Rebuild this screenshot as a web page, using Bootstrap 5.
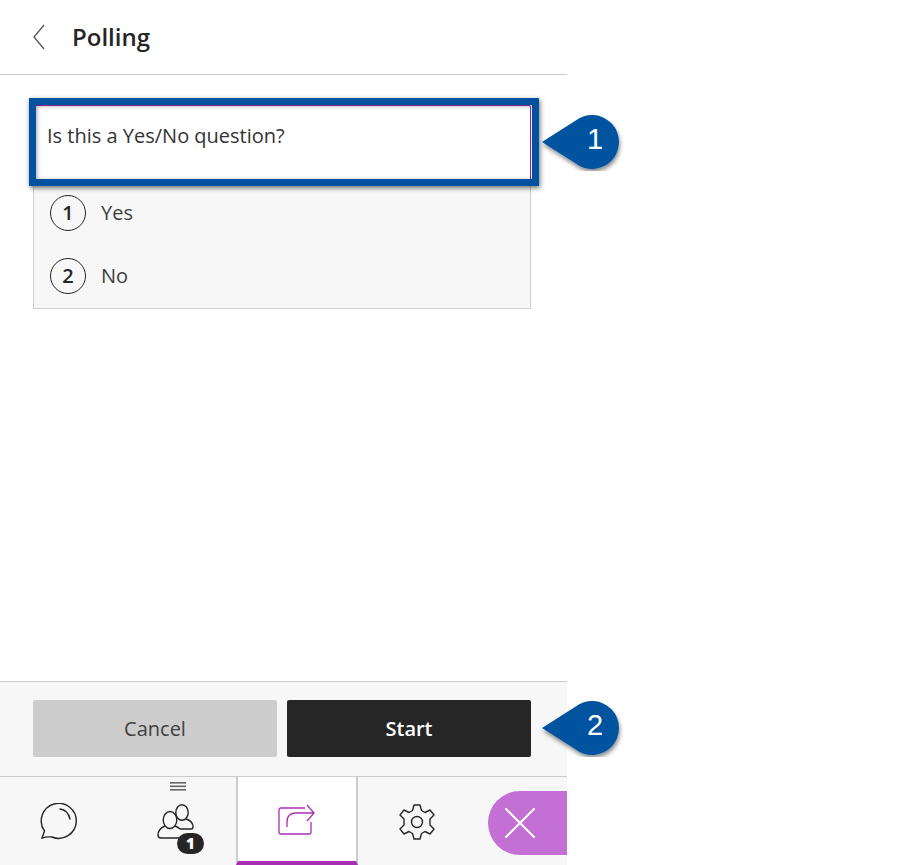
<!DOCTYPE html>
<html lang="en">
<head>
<meta charset="utf-8">
<title>Polling</title>
<link href="https://cdn.jsdelivr.net/npm/bootstrap@5.3.0/dist/css/bootstrap.min.css" rel="stylesheet">
<style>
html,body{height:865px;overflow:hidden;background:#fff}
body{font-family:"Open Sans",sans-serif;color:#262626;position:relative}
.panel-shell{width:567px;height:865px}
.panel-head{height:75px;border-bottom:1px solid #cdcdcd;padding-left:29px;gap:23px}
.panel-title{font-size:24px;font-weight:600;line-height:1;margin:0;color:#262626}
.panel-body-area{padding:30px 36px 0 33px}
.q-field{height:76px;margin-top:0;border:1px solid #9c27b0;border-radius:2px;background:#fff;padding:17px 13px;font-size:20px;line-height:26px;color:#333}
.q-options{background:#f7f7f7;border:1px solid #cdcdcd;border-top:0;height:128px;padding:0 16px}
.q-opt{height:63px;gap:15px;font-size:20px;color:#404040}
.q-num{width:36px;height:36px;border:1px solid #262626;border-radius:50%;font-size:20px;font-weight:600;background:#f7f7f7;color:#262626}
.q-options .q-opt:first-child{margin-top:0}
.act-bar{height:95px;background:#f7f7f7;border-top:1px solid #cdcdcd;padding:18px 36px 0 33px;gap:10px}
.act-btn{flex:1 1 0;height:57px;border:0;border-radius:2px;font-size:20px;padding:0;font-family:inherit}
.act-cancel{background:#cdcdcd;color:#404040}
.act-start{background:#262626;color:#fff;font-weight:600}
.tab-bar{height:89px;background:#f7f7f7;border-top:1px solid #cdcdcd;position:relative}
.tab-cell{height:88px;padding-top:26px}
.tab-a{width:116px}
.tab-b{width:120px;position:relative}
.tab-c{width:122px;background:#fff;border-left:2px solid #cdcdcd;border-right:2px solid #cdcdcd;border-bottom:4px solid #a82fb4}
.tab-d{width:118px}
.grip{position:absolute;left:54px;top:5px;width:16px;height:9px}
.count-pill{position:absolute;left:61px;top:56px;width:27px;height:21px;border-radius:11px;background:#262626;color:#fff;font-size:15px;font-weight:800;line-height:21px;text-align:center}
.leave-btn{position:absolute;right:0;top:14px;width:79px;height:64px;background:#c36fd3;border-radius:32px 0 0 32px;padding-left:16px}
.hl-frame{position:absolute;left:29px;top:98px;width:510px;height:88px;border:7px solid #03529f;box-shadow:1px 2px 5px rgba(0,0,0,.55),inset 1px 1px 4px rgba(0,0,0,.35);pointer-events:none}
.pin{position:absolute;left:540px;width:88px;height:60px}
.pin-num{position:absolute;left:40px;top:12px;width:30px;text-align:center;color:#fff;font-family:"Liberation Sans",sans-serif;font-size:29px;line-height:32px}
.pin-one{top:111px}
.pin-two{top:697px}
</style>
</head>
<body>
<div class="panel-shell d-flex flex-column">
  <div class="panel-head d-flex align-items-center">
    <svg width="20" height="26" viewBox="0 0 20 26" fill="none" stroke="#555" stroke-width="1.3"><path d="M15 1 L5 13 L15 25"/></svg>
    <h1 class="panel-title">Polling</h1>
  </div>
  <div class="panel-body-area flex-grow-1">
    <div class="q-field">Is this a Yes/No question?</div>
    <div class="q-options">
      <div class="q-opt d-flex align-items-center"><span class="q-num d-flex align-items-center justify-content-center">1</span><span>Yes</span></div>
      <div class="q-opt d-flex align-items-center"><span class="q-num d-flex align-items-center justify-content-center">2</span><span>No</span></div>
    </div>
  </div>
  <div class="act-bar d-flex">
    <button class="act-btn act-cancel" type="button">Cancel</button>
    <button class="act-btn act-start" type="button">Start</button>
  </div>
  <div class="tab-bar d-flex">
    <div class="tab-cell tab-a d-flex justify-content-center">
      <svg width="38" height="38" viewBox="0 0 38 38" fill="none" stroke="#262626" stroke-width="1.4"><path d="M3 35 L5.5 28 A17.5 17.5 0 1 1 13 34 Q8 33.5 3 35 Z"/><path d="M21 6 Q29 7 31 16" stroke-linecap="round"/></svg>
    </div>
    <div class="tab-cell tab-b d-flex justify-content-center">
      <svg class="grip" viewBox="0 0 16 9" fill="#666"><rect y="0" width="16" height="1.6"/><rect y="3.5" width="16" height="1.6"/><rect y="7" width="16" height="1.6"/></svg>
      <svg width="38" height="38" viewBox="0 0 38 38" fill="none" stroke="#262626" stroke-width="1.4"><ellipse cx="25" cy="9.5" rx="6.2" ry="7.8"/><path d="M29 16 Q36 18 36 24 Q36 26 34 26 L23 26"/><ellipse cx="13" cy="17" rx="6.8" ry="8.5" fill="#f7f7f7"/><path d="M8 23 Q1 26 1 32 Q1 35 4 35 L23 35 M18 23 Q21 24 23 26"/></svg>
      <span class="count-pill">1</span>
    </div>
    <div class="tab-cell tab-c d-flex justify-content-center">
      <svg width="38" height="34" viewBox="0 0 38 34" fill="none" stroke="#a82fb4" stroke-width="1.3"><path d="M27 5 H3 Q1 5 1 7 V29 Q1 31 3 31 H31 Q33 31 33 29 V19"/><path d="M9 24 V19 Q9 10 18 10 H36 M29 2 L36 10 L29 18"/></svg>
    </div>
    <div class="tab-cell tab-d d-flex justify-content-center">
      <svg width="38" height="38" viewBox="0 0 38 38" fill="none" stroke="#262626" stroke-width="1.4"><circle cx="19" cy="19" r="5.5"/><path d="M16 2 H22 L23.500 7.500 L27 9.500 L32 7 L36 12 L32 16 V22 L36 26 L32 31 L27 28.500 L23.500 30.500 L22 36 H16 L14.500 30.500 L11 28.500 L6 31 L2 26 L6 22 V16 L2 12 L6 7 L11 9.500 L14.500 7.500 Z" stroke-linejoin="round"/></svg>
    </div>
    <div class="leave-btn d-flex align-items-center">
      <svg width="32" height="32" viewBox="0 0 32 32" fill="none" stroke="#fff" stroke-width="2" stroke-linecap="round"><path d="M2 2 L30 30 M30 2 L2 30"/></svg>
    </div>
  </div>
</div>
<div class="hl-frame"></div>
<div class="pin pin-one">
  <svg width="88" height="60" viewBox="0 0 88 60"><defs><filter id="ds" x="-20%" y="-20%" width="140%" height="150%"><feDropShadow dx="1" dy="3" stdDeviation="2" flood-opacity=".45"/></filter></defs><path d="M2 31 L35 10 A27 27 0 1 1 35 52 Z" fill="#03529f" filter="url(#ds)"/></svg>
  <span class="pin-num">1</span>
</div>
<div class="pin pin-two">
  <svg width="88" height="60" viewBox="0 0 88 60"><path d="M2 31 L35 10 A27 27 0 1 1 35 52 Z" fill="#03529f" filter="url(#ds)"/></svg>
  <span class="pin-num">2</span>
</div>
<script src="https://cdn.jsdelivr.net/npm/bootstrap@5.3.0/dist/js/bootstrap.bundle.min.js"></script>
</body>
</html>
